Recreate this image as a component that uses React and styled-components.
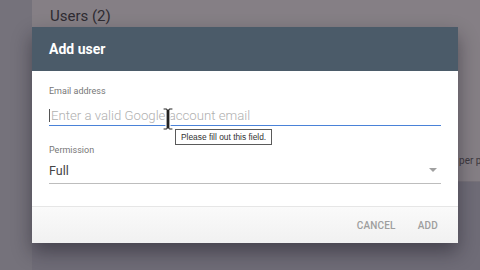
import React from 'react';
import styled, { createGlobalStyle } from 'styled-components';

const GlobalStyle = createGlobalStyle`
  html, body {
    margin: 0;
    padding: 0;
    width: 480px;
    height: 270px;
    overflow: hidden;
    font-family: Roboto, "Liberation Sans", sans-serif;
  }
`;

const Page = styled.div`
  position: relative;
  display: flex;
  width: 480px;
  height: 270px;
  background: #6f6c77;
  overflow: hidden;
`;

const SideNav = styled.div`
  width: 32px;
  flex: none;
  background: #75727b;
`;

const Main = styled.div`
  flex: 1;
  min-width: 0;
  display: flex;
  flex-direction: column;
  overflow: hidden;
`;

const UsersCard = styled.div`
  height: 182px;
  flex: none;
  box-sizing: border-box;
  background: #857f85;
  border-bottom: 1px solid #77727a;
  padding: 7px 18px 0;
  display: flex;
  flex-direction: column;
  overflow: hidden;
`;

const CardTitle = styled.div`
  font-size: 15px;
  line-height: 18px;
  color: #2e2b31;
`;

const CardFooter = styled.div`
  margin-top: auto;
  margin-bottom: 15px;
  padding-left: 382px;
  font-size: 10px;
  color: #3d393f;
  white-space: nowrap;
`;

const Dialog = styled.div`
  position: absolute;
  left: 32px;
  top: 27px;
  width: 426px;
  height: 216px;
  display: flex;
  flex-direction: column;
  background: #fff;
  box-shadow: 0 9px 18px rgba(20, 18, 28, 0.45);
  z-index: 2;
`;

const DialogHeader = styled.div`
  height: 44px;
  flex: none;
  display: flex;
  align-items: center;
  padding: 0 17px;
  background: #4b5b69;
  color: #fff;
  font-size: 14px;
  font-weight: 700;
`;

const DialogBody = styled.div`
  flex: 1;
  padding: 15px 17px 0;
  display: flex;
  flex-direction: column;
`;

const Label = styled.div`
  font-size: 9px;
  line-height: 11px;
  color: #777;
  margin-top: ${p => p.$gap || 0}px;
`;

const InputLine = styled.div`
  margin-top: 10px;
  height: 18px;
  line-height: 18px;
  font-size: 13.2px;
  font-weight: 300;
  color: #b0b0b0;
  border-bottom: 1.5px solid #4a82d8;
  white-space: nowrap;
`;

const Caret = styled.span`
  display: inline-block;
  width: 1px;
  height: 13px;
  margin-right: 1px;
  vertical-align: -2px;
  background: #555;
`;

const SelectLine = styled.div`
  display: flex;
  align-items: center;
  justify-content: space-between;
  margin-top: 1px;
  height: 26px;
  font-size: 12.5px;
  color: #444;
  border-bottom: 1px solid #bdbdbd;
  padding-right: 4px;
`;

const Arrow = styled.span`
  width: 0;
  height: 0;
  border-left: 4px solid transparent;
  border-right: 4px solid transparent;
  border-top: 4px solid #a0a0a0;
`;

const DialogFooter = styled.div`
  height: 36px;
  flex: none;
  display: flex;
  align-items: center;
  justify-content: flex-end;
  gap: 6px;
  padding-right: 12px;
  border-top: 1px solid #e6e6e6;
  background: linear-gradient(#fafafa, #f1f1f1);
`;

const FlatButton = styled.button`
  border: none;
  background: none;
  padding: 4px 8px;
  font-family: Roboto, "Liberation Sans", sans-serif;
  font-size: 10px;
  font-weight: 500;
  letter-spacing: 0.2px;
  color: #9e9e9e;
`;

const Tooltip = styled.div`
  position: absolute;
  left: 175px;
  top: 129px;
  width: 97px;
  height: 16px;
  box-sizing: border-box;
  display: flex;
  align-items: center;
  padding-left: 5px;
  background: #fff;
  border: 1px solid #5a5a5a;
  font-family: "Liberation Sans", sans-serif;
  font-size: 8.4px;
  color: #333;
  white-space: nowrap;
  z-index: 3;
`;

const Pointer = styled.svg`
  position: absolute;
  left: 161px;
  top: 106px;
  z-index: 4;
`;

export default function App() {
  return (
    <>
      <GlobalStyle />
      <Page>
        <SideNav />
        <Main>
          <UsersCard>
            <CardTitle>Users (2)</CardTitle>
            <CardFooter>Rows per page: 10</CardFooter>
          </UsersCard>
        </Main>

        <Dialog>
          <DialogHeader>Add user</DialogHeader>
          <DialogBody>
            <Label>Email address</Label>
            <InputLine>
              <Caret />Enter a valid Google account email
            </InputLine>
            <Label $gap={19}>Permission</Label>
            <SelectLine>
              <span>Full</span>
              <Arrow />
            </SelectLine>
          </DialogBody>
          <DialogFooter>
            <FlatButton>CANCEL</FlatButton>
            <FlatButton>ADD</FlatButton>
          </DialogFooter>
        </Dialog>

        <Tooltip>Please fill out this field.</Tooltip>
        <Pointer width="14" height="26" viewBox="0 0 14 26">
          <path
            d="M2 2h4l1 1 1-1h4v2H9v18h3v2H8l-1-1-1 1H2v-2h3V4H2z"
            fill="#222"
            stroke="#fff"
            strokeWidth="1.2"
            strokeLinejoin="round"
          />
        </Pointer>
      </Page>
    </>
  );
}
